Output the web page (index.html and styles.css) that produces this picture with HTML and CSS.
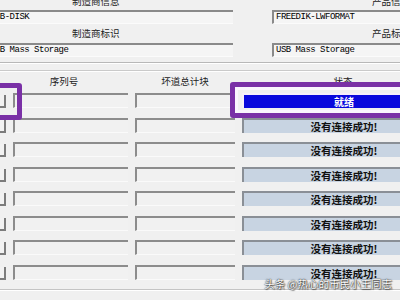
FILE: index.html
```html
<!DOCTYPE html>
<html>
<head>
<meta charset="utf-8">
<link rel="stylesheet" href="styles.css">
</head>
<body>
<div class="win">
  <div class="top">
    <div class="col col-left">
      <div class="lbl lbl-first">制造商信息</div>
      <div class="edit edit-first">USB-DISK</div>
      <div class="lbl">制造商标识</div>
      <div class="edit">USB Mass Storage</div>
    </div>
    <div class="col col-right">
      <div class="lbl lbl-first">产品信息</div>
      <div class="edit edit-first">FREEDIK-LWFORMAT</div>
      <div class="lbl">产品标识</div>
      <div class="edit">USB Mass Storage</div>
    </div>
  </div>
  <div class="sep sep-a"></div>
  <div class="sep sep-b"></div>
  <div class="thead">
    <div class="th"></div>
    <div class="th th-serial">序列号</div>
    <div class="th">坏道总计块</div>
    <div class="th">状态</div>
  </div>
  <div class="tbody">
    <div class="num"></div><div class="field"></div><div class="field"></div><div class="status ready">就绪</div>
    <div class="num"></div><div class="field"></div><div class="field"></div><div class="status">没有连接成功!</div>
    <div class="num"></div><div class="field"></div><div class="field"></div><div class="status">没有连接成功!</div>
    <div class="num"></div><div class="field"></div><div class="field"></div><div class="status">没有连接成功!</div>
    <div class="num"></div><div class="field"></div><div class="field"></div><div class="status">没有连接成功!</div>
    <div class="num"></div><div class="field"></div><div class="field"></div><div class="status">没有连接成功!</div>
    <div class="num"></div><div class="field"></div><div class="field"></div><div class="status">没有连接成功!</div>
    <div class="num"></div><div class="field"></div><div class="field"></div><div class="status">没有连接成功!</div>
  </div>
  <div class="sep sep-c"></div>

  <div class="mark mark-left"></div>
  <div class="mark mark-right"></div>
  <div class="watermark">头条 @热心的市民小王同志</div>
</div>
</body>
</html>
```

FILE: styles.css
```css
html, body {
  margin: 0;
  padding: 0;
}
body {
  width: 400px;
  height: 300px;
  overflow: hidden;
  background: #f0f0f0;
  font-family: "Noto Sans CJK SC", "Liberation Sans", sans-serif;
  color: #111;
}
.win {
  position: relative;
  width: 400px;
  height: 300px;
  overflow: hidden;
}
.top {
  display: grid;
  grid-template-columns: 247px 178px;
  column-gap: 39px;
  margin-left: -14px;
  margin-top: -5px;
}
.col {
  display: flex;
  flex-direction: column;
}
.lbl {
  font-size: 9.5px;
  line-height: 12px;
  height: 12px;
  margin-top: 3px;
  white-space: nowrap;
  color: #222;
}
.lbl-first {
  margin-top: 0;
}
.col-left .lbl {
  padding-left: 86px;
}
.col-right .lbl {
  padding-left: 100px;
}
.edit {
  height: 14px;
  box-sizing: border-box;
  margin-top: 4px;
  border-top: 2px solid #8a8a8a;
  border-left: 2px solid #8a8a8a;
  border-bottom: 1px solid #fbfbfb;
  background: #f5f5f5;
  padding-left: 2px;
  font-family: "Liberation Mono", "DejaVu Sans Mono", monospace;
  font-size: 9px;
  letter-spacing: -0.5px;
  line-height: 11px;
  color: #000;
  white-space: nowrap;
}
.edit-first {
  margin-top: 3px;
}
.sep {
  height: 1px;
  border-bottom: 1px solid #ffffff;
}
.sep-a {
  margin-top: 5px;
  background: #b8b8b8;
}
.sep-b {
  margin-top: 6px;
  background: #cacaca;
}
.sep-c {
  margin-top: 9px;
  background: #c4c4c4;
}
.thead,
.tbody {
  display: grid;
  grid-template-columns: 26px 115px 100px 202px;
  column-gap: 7px;
  margin-left: -20px;
}
.thead {
  height: 18px;
  margin-bottom: 3px;
}
.tbody {
  grid-template-rows: repeat(8, 15px);
  row-gap: 9.57px;
}
.th {
  font-size: 9.5px;
  line-height: 18px;
  text-align: center;
  color: #222;
  white-space: nowrap;
}
.th-serial {
  padding-right: 13px;
}
.num {
  box-sizing: border-box;
  border-right: 2px solid #7c7c7c;
  border-bottom: 2px solid #7c7c7c;
  margin-top: 2px;
  background: #f2f2f2;
}
.field {
  box-sizing: border-box;
  border-top: 2px solid #8c8c8c;
  border-left: 2px solid #8c8c8c;
  border-bottom: 1px solid #fafafa;
  background: #f1f1f1;
}
.status {
  box-sizing: border-box;
  border-top: 2px solid #8a8f96;
  border-left: 2px solid #8a8f96;
  background: #c8d4e2;
  font-size: 10.5px;
  font-weight: bold;
  line-height: 13px;
  text-align: center;
  color: #111;
  white-space: nowrap;
}
.status.ready {
  background: #0808dc;
  border-top-color: #f6f0fa;
  border-left-color: #f6f0fa;
  color: #ffffff;
  font-size: 10px;
}
.mark {
  position: absolute;
  box-sizing: border-box;
  border: 5px solid #7a30a6;
  border-radius: 3px;
}
.mark-left {
  left: -10px;
  top: 83px;
  width: 32px;
  height: 37px;
}
.mark-right {
  left: 230px;
  top: 82px;
  width: 190px;
  height: 36px;
  box-shadow: inset 0 0 0 3px rgba(252, 246, 255, 0.85);
}
.watermark {
  position: absolute;
  right: 8px;
  bottom: 9px;
  font-size: 10.5px;
  line-height: 14px;
  color: #ffffff;
  white-space: nowrap;
  text-shadow: 0 0 1px rgba(0, 0, 0, 0.9), 0 0 2px rgba(0, 0, 0, 0.6), 1px 1px 1px rgba(0, 0, 0, 0.5);
}
```
